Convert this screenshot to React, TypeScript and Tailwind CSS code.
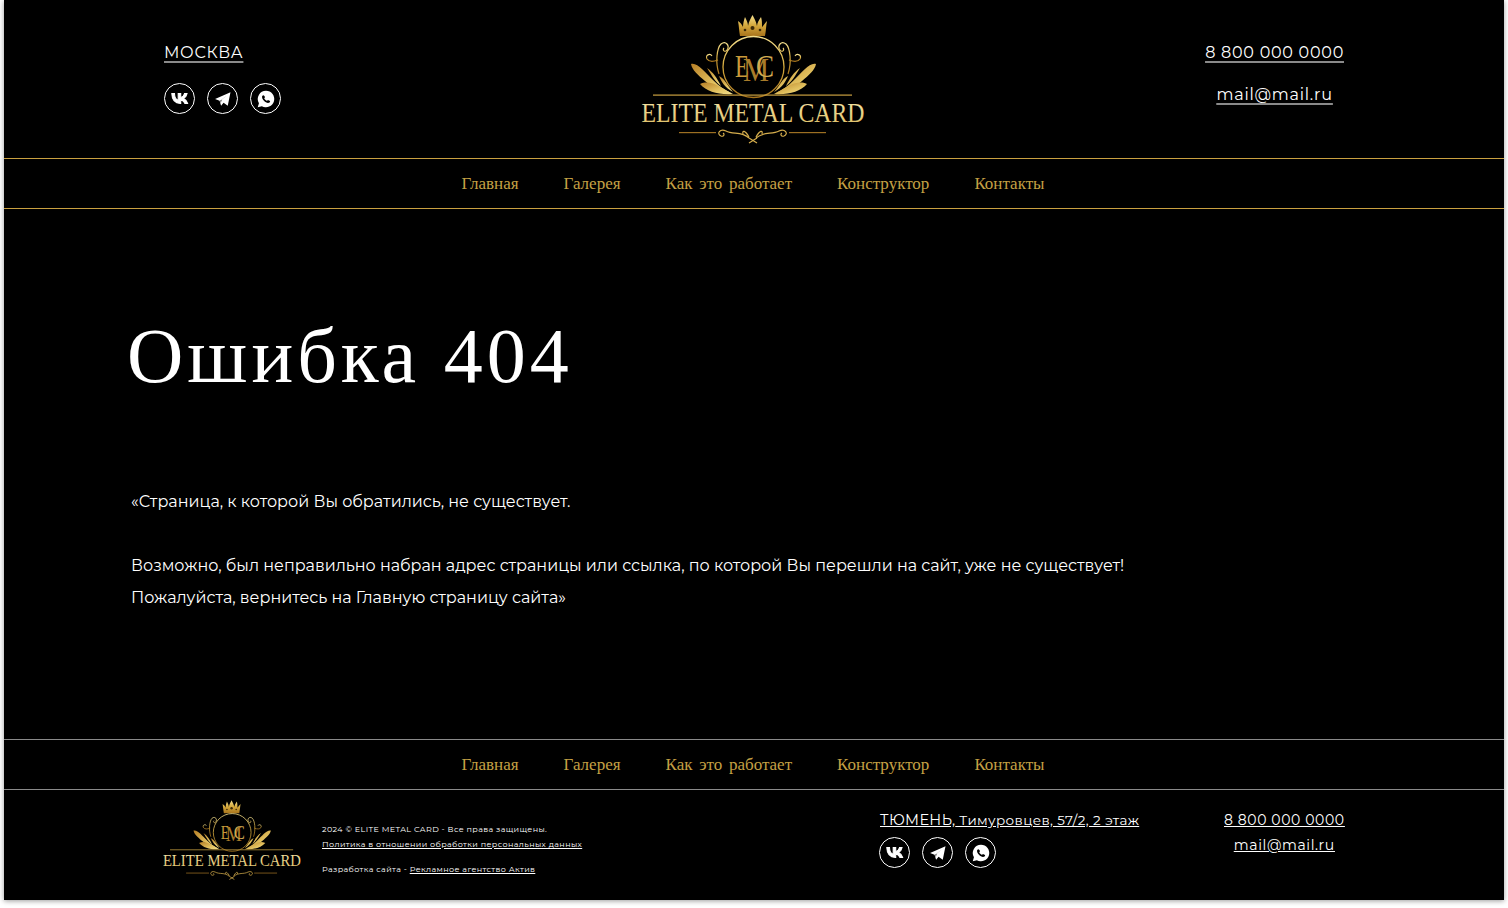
import React from "react";

const sans = "font-['Montserrat','Inter','Noto_Sans',sans-serif]";
const serif = "'Liberation Serif',serif";

function Logo({ className }: { className: string }) {
  return (
    <svg viewBox="0 0 250 160" className={className}>
      <defs>
        <linearGradient id="gold" x1="0" y1="0" x2="0" y2="1">
          <stop offset="0" stopColor="#f5e08e" />
          <stop offset="0.5" stopColor="#d4a83c" />
          <stop offset="1" stopColor="#a8741c" />
        </linearGradient>
        <linearGradient id="leaf" x1="0" y1="0" x2="1" y2="1">
          <stop offset="0" stopColor="#b77f26" />
          <stop offset="0.6" stopColor="#e2c15f" />
          <stop offset="1" stopColor="#f3e08f" />
        </linearGradient>
        <linearGradient id="goldText" x1="0" y1="0" x2="0" y2="1">
          <stop offset="0" stopColor="#f6e8ac" />
          <stop offset="1" stopColor="#dcbc62" />
        </linearGradient>
      </defs>
      <path d="M111 36 C110 31 110 26 109 21 C112 23 113 25 114 27 C114 23 115 20 116 17 C118 21 119 23 119 26 C120 21 122 18 123.500 15 C125 18 127 21 128 26 C128 23 130 20 132 17 C133 20 133 23 133 27 C135 25 136 23 138 21 C137 26 137 31 136 36 Z" fill="url(#gold)" />
      <circle cx="123.500" cy="28" r="2" fill="#3d2b08" />
      <circle cx="116" cy="30" r="1.300" fill="#3d2b08" />
      <circle cx="131" cy="30" r="1.300" fill="#3d2b08" />
      <circle cx="124.500" cy="67" r="30.500" fill="none" stroke="url(#gold)" strokeWidth="1.300" />
      <text x="106" y="77" fontFamily={serif} fontSize="32" textLength="14" lengthAdjust="spacingAndGlyphs" fill="#c99a3a">E</text>
      <text x="114" y="80.500" fontFamily={serif} fontSize="34" textLength="26" lengthAdjust="spacingAndGlyphs" fill="#a97c2a">M</text>
      <text x="127" y="77" fontFamily={serif} fontSize="32" textLength="18" lengthAdjust="spacingAndGlyphs" fill="#d2ab52">C</text>
      <g fill="none" stroke="url(#gold)" strokeWidth="1.200">
        <path d="M90 74 C86 62 88 48 92 44 C97 40 101 46 98 50 C96 53 93 50 95 48" />
        <path d="M159 74 C163 62 161 48 157 44 C152 40 148 46 151 50 C153 53 156 50 154 48" />
        <path d="M89 60 C84 62 80 62 78 59 C76 55 81 53 83 56" />
        <path d="M160 60 C165 62 169 62 171 59 C173 55 168 53 166 56" />
      </g>
      <g fill="url(#leaf)">
        <path d="M62 64 C68 62 76 72 84 80 C90 86 96 90 102 93 C92 91 83 87 76 81 C69 75 63 70 62 64 Z" />
        <path d="M187 64 C181 62 173 72 165 80 C159 86 153 90 147 93 C157 91 166 87 173 81 C180 75 186 70 187 64 Z" />
        <path d="M71 84 C82 79 92 88 104 94 C90 95 78 92 71 84 Z" />
        <path d="M178 84 C167 79 157 88 145 94 C159 95 171 92 178 84 Z" />
        <path d="M78 68 C81 72 84 80 92 86 C88 78 84 72 78 68 Z" />
        <path d="M171 68 C168 72 165 80 157 86 C161 78 165 72 171 68 Z" />
        <path d="M90 76 C92 81 96 88 104 92 C98 85 96 79 90 76 Z" />
        <path d="M159 76 C157 81 153 88 145 92 C151 85 153 79 159 76 Z" />
      </g>
      <rect x="24" y="94.500" width="199" height="1.200" fill="#c9a040" />
      <text x="12.500" y="122" fontFamily={serif} fontSize="28" textLength="223" lengthAdjust="spacingAndGlyphs" fill="url(#goldText)">ELITE METAL CARD</text>
      <rect x="50" y="132" width="37" height="1.200" fill="#9c6f22" />
      <rect x="160" y="132" width="37" height="1.200" fill="#9c6f22" />
      <g fill="none" stroke="#d5ad4c" strokeWidth="1.200">
        <path d="M120 138 C112 131 104 135 97 131 C91 128 87 134 92 136 C95 137 96 134 94 133" />
        <path d="M127 138 C135 131 143 135 150 131 C156 128 160 134 155 136 C152 137 151 134 153 133" />
        <path d="M120 137 C116 130 113 130 114 134" />
        <path d="M127 137 C131 130 134 130 133 134" />
        <path d="M120 143 L128 138 M128 143 L120 138" />
      </g>
    </svg>
  );
}

const VkPath = "M13.1 17.6C6.9 17.6 3.4 13.4 3.2 6.4h3.1c.1 5.1 2.4 7.3 4.2 7.7V6.4h2.9v4.4c1.8-.2 3.7-2.2 4.3-4.4h2.9c-.5 2.7-2.5 4.7-3.9 5.5 1.4.7 3.7 2.4 4.6 5.7h-3.2c-.7-2.1-2.4-3.8-4.7-4v4h-.3z";

function Socials() {
  return (
    <div className="flex gap-3">
      <span className="flex h-[31px] w-[31px] items-center justify-center rounded-full border border-white">
        <svg viewBox="0 0 24 24" className="h-[21px] w-[21px] fill-white stroke-white stroke-[1.2]"><path d={VkPath} /></svg>
      </span>
      <span className="flex h-[31px] w-[31px] items-center justify-center rounded-full border border-white">
        <svg viewBox="0 0 24 24" className="h-[20px] w-[20px] fill-white"><path fillRule="evenodd" d="M21 4 2.500 12l5.400 2 1.800 6 3-3.600 5 3.600L21 4Zm-4.700 4-7.400 5.900.5 3 .9-3.900 6-5Z" /></svg>
      </span>
      <span className="flex h-[31px] w-[31px] items-center justify-center rounded-full border border-white">
        <svg viewBox="0 0 24 24" className="h-[22px] w-[22px] fill-white"><path fillRule="evenodd" d="M12 3a9 9 0 0 0-7.700 13.600L3 21l4.500-1.200A9 9 0 1 0 12 3Zm-3 4.800c-.6 0-1.300.9-1.300 2 0 2.600 3.600 6.500 6.500 6.500 1.300 0 2.300-.8 2.300-1.800 0-.5-2-1.500-2.400-1.500-.4 0-.7 1-1.100 1-.9 0-2.900-1.900-2.900-2.800 0-.4.8-.7.8-1.200C10.900 9.300 9.800 7.800 9 7.800Z" /></svg>
      </span>
    </div>
  );
}

function Nav({ className }: { className: string }) {
  const items = ["Главная", "Галерея", "Как это работает", "Конструктор", "Контакты"];
  return (
    <nav className={`flex h-[51px] items-center justify-center gap-[45px] border-y pt-px pr-[2px] font-['Liberation_Serif',serif] text-[17px] [word-spacing:2.5px] text-[#c5a044] ${className}`}>
      {items.map((t) => <a key={t}>{t}</a>)}
    </nav>
  );
}

const headerLink = "underline decoration-[#8a8a8a] decoration-2 underline-offset-[3px]";

export default function App() {
  return (
    <div className={`min-h-[908px] bg-white px-1 pb-2 ${sans} text-white`}>
      <div className="flex min-h-[900px] flex-col bg-black shadow-[0_1px_5px_rgba(0,0,0,0.4)]">
        <header className="flex h-[158px] items-start pl-40 pr-40">
          <div className="flex-1 pt-[41px]">
            <a className={`text-[16px] leading-[21px] tracking-[0.7px] ${headerLink}`}>МОСКВА</a>
            <div className="mt-[18px]"><Socials /></div>
          </div>
          <Logo className="h-[160px] w-[250px] shrink-0" />
          <div className="flex flex-1 justify-end">
            <div className={`flex flex-col items-center pt-[42px] text-[16px] leading-[21px] tracking-[0.75px] ${headerLink}`}>
              <a>8 800 000 0000</a>
              <a className="mt-[21px]">mail@mail.ru</a>
            </div>
          </div>
        </header>
        <Nav className="border-[#c9a040]" />
        <main className="flex-1 pl-[123px]">
          <h1 className="mt-[102px] font-['Liberation_Serif',serif] text-[78px] font-normal leading-[90px] tracking-[4px]">Ошибка 404</h1>
          <div className="mt-[85px] pl-[4px] text-[16px] leading-[32px]">
            <p>«Страница, к которой Вы обратились, не существует.</p>
            <p className="mt-[32px]">Возможно, был неправильно набран адрес страницы или ссылка, по которой Вы перешли на сайт, уже не существует!</p>
            <p>Пожалуйста, вернитесь на Главную страницу сайта»</p>
          </div>
        </main>
        <Nav className="border-[#8a8a8a]" />
        <footer className="flex h-[110px] pl-[151px]">
          <Logo className="mt-px h-[99px] w-[155px] shrink-0" />
          <div className="ml-[12px] w-[260px] shrink-0 whitespace-nowrap pt-[32px] text-[8px] leading-[15px] tracking-[0.39px]">
            <p>2024 © ELITE METAL CARD - Все права защищены.</p>
            <a className="underline">Политика в отношении обработки персональных данных</a>
            <p className="mt-[10px]">Разработка сайта - <a className="underline">Рекламное агентство Актив</a></p>
          </div>
          <div className="ml-[297px] w-[261px] shrink-0 pt-[20px]">
            <a className="block whitespace-nowrap pl-px text-[13.5px] leading-[20px] tracking-[0.37px] underline"><span className="text-[14.5px]">ТЮМЕНЬ,</span> Тимуровцев, 57/2, 2 этаж</a>
            <div className="mt-[7px]"><Socials /></div>
          </div>
          <div className="ml-[84px] flex flex-col items-center pt-[20px] text-[14px] leading-[20px] tracking-[0.6px] underline">
            <a>8 800 000 0000</a>
            <a className="mt-[5px]">mail@mail.ru</a>
          </div>
        </footer>
      </div>
    </div>
  );
}
